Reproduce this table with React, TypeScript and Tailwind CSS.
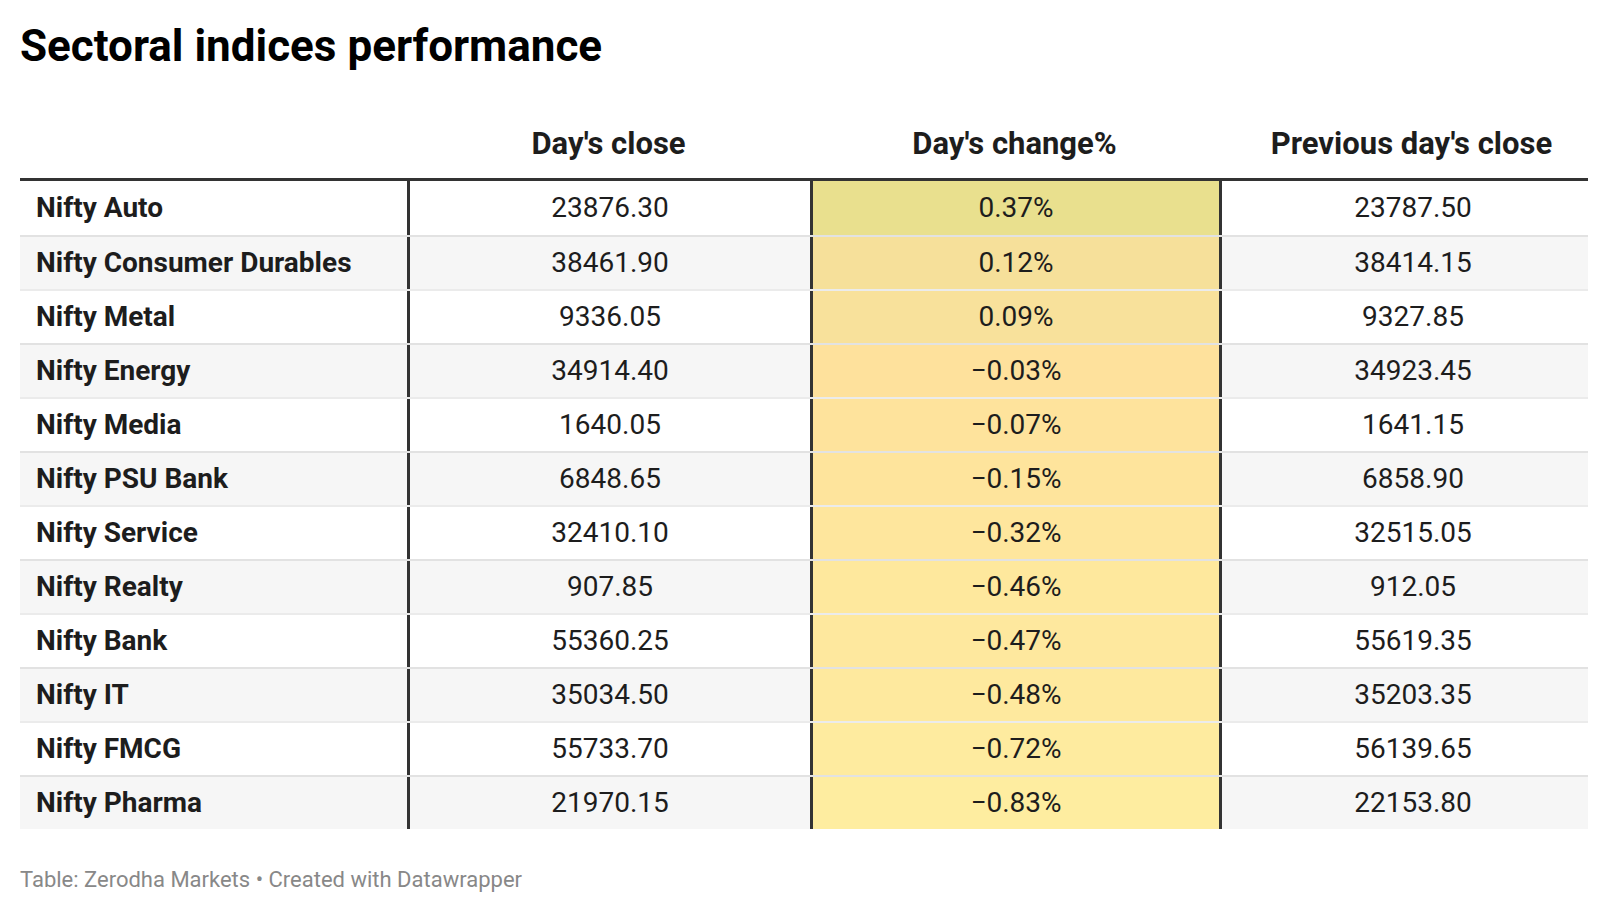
const rows = [
  { name: "Nifty Auto", close: "23876.30", change: "0.37%", prev: "23787.50", color: "bg-[#e9e08e]" },
  { name: "Nifty Consumer Durables", close: "38461.90", change: "0.12%", prev: "38414.15", color: "bg-[#f6e09a]" },
  { name: "Nifty Metal", close: "9336.05", change: "0.09%", prev: "9327.85", color: "bg-[#f8e19b]" },
  { name: "Nifty Energy", close: "34914.40", change: "−0.03%", prev: "34923.45", color: "bg-[#fee19c]" },
  { name: "Nifty Media", close: "1640.05", change: "−0.07%", prev: "1641.15", color: "bg-[#fee39c]" },
  { name: "Nifty PSU Bank", close: "6848.65", change: "−0.15%", prev: "6858.90", color: "bg-[#fee49c]" },
  { name: "Nifty Service", close: "32410.10", change: "−0.32%", prev: "32515.05", color: "bg-[#fee69d]" },
  { name: "Nifty Realty", close: "907.85", change: "−0.46%", prev: "912.05", color: "bg-[#fee89d]" },
  { name: "Nifty Bank", close: "55360.25", change: "−0.47%", prev: "55619.35", color: "bg-[#fee89e]" },
  { name: "Nifty IT", close: "35034.50", change: "−0.48%", prev: "35203.35", color: "bg-[#fee99e]" },
  { name: "Nifty FMCG", close: "55733.70", change: "−0.72%", prev: "56139.65", color: "bg-[#feeb9f]" },
  { name: "Nifty Pharma", close: "21970.15", change: "−0.83%", prev: "22153.80", color: "bg-[#feeda0]" },
];

const cols = "grid grid-cols-[387px_403px_409px_369px]";

export default function App() {
  return (
    <div className="w-[1608px] h-[914px] bg-white px-5 font-['Roboto',sans-serif] text-[#1d1d1d]">
      <h1 className="pt-[22px] text-[44px] leading-[48px] font-bold text-black">
        Sectoral indices performance
      </h1>

      <div className="mt-10">
        <div className={`${cols} h-[71px] items-center border-b-[3px] border-[#333] text-[31px] font-bold`}>
          <div />
          <div className="text-center">Day's close</div>
          <div className="text-center">Day's change%</div>
          <div className="text-center pl-4">Previous day's close</div>
        </div>

        {rows.map((r, i) => (
          <div
            key={r.name}
            className={`${cols} h-[54px] text-[28px] ${i % 2 === 1 ? "bg-[#f6f6f6]" : "bg-white"} ${
              i > 0 ? "border-t-2 border-black/[0.08]" : ""
            }`}
          >
            <div className="flex items-center pl-4 font-bold">{r.name}</div>
            <div className="flex items-center justify-center border-l-[3px] border-[#333]">{r.close}</div>
            <div className={`flex items-center justify-center border-l-[3px] border-[#333] ${r.color}`}>
              {r.change}
            </div>
            <div className="flex items-center justify-center border-l-[3px] border-[#333] pl-4">{r.prev}</div>
          </div>
        ))}
      </div>

      <p className="mt-[38px] text-[22px] leading-[26px] text-[#888]">
        Table: Zerodha Markets • Created with Datawrapper
      </p>
    </div>
  );
}
